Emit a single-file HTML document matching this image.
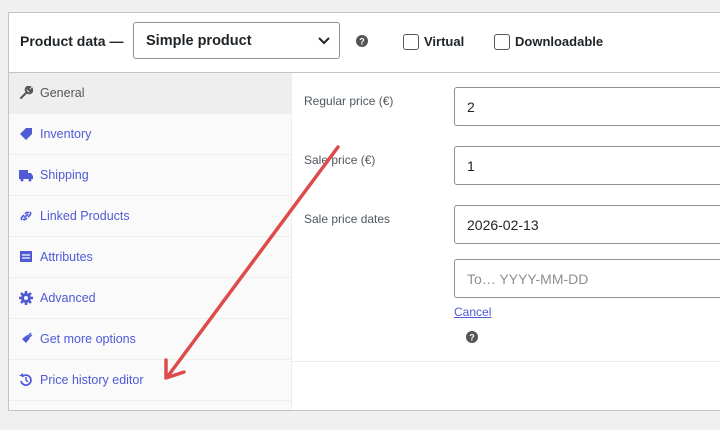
<!DOCTYPE html>
<html><head><style>
body{margin:0;width:720px;height:430px;background:#f0f0f1;font-family:"Liberation Sans",sans-serif;position:relative;overflow:hidden;font-size:13px}
.panel{position:absolute;left:8px;top:12px;width:720px;height:397px;background:#fff;border:1px solid #c3c4c7}
.hdr{position:absolute;left:0;top:0;right:0;height:59px;border-bottom:1px solid #c3c4c7}
.pd{position:absolute;left:11px;top:20px;font-weight:bold;font-size:14px;color:#1d2327}
.sel{position:absolute;left:124px;top:9px;width:207px;height:37px;border:1px solid #8c8f94;border-radius:3px;box-sizing:border-box}
.sel span{position:absolute;left:12px;top:10px;font-weight:bold;font-size:14.5px;color:#1d2327}
.cb{position:absolute;top:21px;width:14px;height:14px;border:1px solid #50575e;border-radius:3px}
.lbl{position:absolute;top:21px;font-weight:bold;font-size:13px;color:#1d2327}
.side{position:absolute;left:0;top:60px;width:282px;height:337px;background:#fafafa;border-right:1px solid #eee}
.tab{height:40px;border-bottom:1px solid #eee;position:relative;color:#4f5bd5;font-size:12.5px}
.tab span{position:absolute;left:31px;top:13px}
.tab svg{position:absolute;left:10px;top:13px}
.tab.act{background:#eee;color:#555}
.content{position:absolute;left:283px;top:60px;width:440px;height:288px;border-bottom:1px solid #eee}
.fl{position:absolute;left:12px;font-size:12px;color:#50575e}
.inp{position:absolute;left:162px;width:300px;height:39px;border:1px solid #8c8f94;border-radius:3px;box-sizing:border-box;font-size:14px;color:#1d2327;padding:11px 12px}
</style></head><body>
<div class="panel">
 <div class="hdr">
  <div class="pd">Product data —</div>
  <div class="sel"><span>Simple product</span>
   <svg style="position:absolute;right:9px;top:14px" width="12" height="8"><path d="M1 1l5 5 5-5" stroke="#1d2327" stroke-width="2" fill="none"/></svg></div>
  <svg style="position:absolute;left:347px;top:22px" width="12" height="12"><circle cx="6" cy="6" r="6" fill="#555"/><text x="6" y="9.5" font-size="9" font-weight="bold" fill="#fff" text-anchor="middle" font-family="Liberation Sans">?</text></svg>
  <div class="cb" style="left:394px"></div><div class="lbl" style="left:415px">Virtual</div>
  <div class="cb" style="left:485px"></div><div class="lbl" style="left:506px">Downloadable</div>
 </div>
 <div class="side">
  <div class="tab act"><svg width="14" height="14"><path d="M2 12L8 6M7 5a3 3 0 0 1 4-4l-2 2 2 2 2-2a3 3 0 0 1-4 4" stroke="#555" stroke-width="2" fill="none" stroke-linecap="round"/></svg><span>General</span></div>
  <div class="tab"><svg width="14" height="14"><path d="M1 7L7 1H13V7L7 13Z" fill="#4f5bd5"/></svg><span>Inventory</span></div>
  <div class="tab"><svg width="14" height="14"><path d="M0 2H9V11H0ZM9 5H12L14 8V11H9Z" fill="#4f5bd5"/><circle cx="3" cy="12" r="1.5" fill="#4f5bd5"/><circle cx="11" cy="12" r="1.5" fill="#4f5bd5"/></svg><span>Shipping</span></div>
  <div class="tab"><svg width="14" height="14"><path d="M3 11a2 2 0 0 1 0-3l2-2M11 3a2 2 0 0 1 0 3l-2 2M5 9L9 5M6 5l1-1a2 2 0 0 1 3 0M8 9l-1 1a2 2 0 0 1-3 0" stroke="#4f5bd5" stroke-width="1.6" fill="none"/></svg><span>Linked Products</span></div>
  <div class="tab"><svg width="14" height="14"><rect x="1" y="1" width="12" height="11" fill="#4f5bd5"/><path d="M3 5H11M3 8H11" stroke="#fff" stroke-width="1.3"/></svg><span>Attributes</span></div>
  <div class="tab"><svg width="14" height="14"><circle cx="7" cy="7" r="5" fill="#4f5bd5"/><path d="M7 0V14M0 7H14M2 2L12 12M12 2L2 12" stroke="#4f5bd5" stroke-width="2.5"/><circle cx="7" cy="7" r="2" fill="#fafafa"/></svg><span>Advanced</span></div>
  <div class="tab"><svg width="14" height="14"><path d="M2 12L5 9L3 7L8 3L11 6L7 11L5 9" fill="#4f5bd5"/><path d="M9 4L12 1M10 5L13 3" stroke="#4f5bd5" stroke-width="1.5"/></svg><span>Get more options</span></div>
  <div class="tab"><svg width="14" height="14"><path d="M3 4A5 5 0 1 1 2 8" stroke="#4f5bd5" stroke-width="1.8" fill="none"/><path d="M0 3H4V0" fill="#4f5bd5"/><path d="M7 4V7L9 9" stroke="#4f5bd5" stroke-width="1.5" fill="none"/></svg><span>Price history editor</span></div>
 </div>
 <div class="content">
  <div class="fl" style="top:21px">Regular price (€)</div>
  <div class="inp" style="top:14px">2</div>
  <div class="fl" style="top:80px">Sale price (€)</div>
  <div class="inp" style="top:73px">1</div>
  <div class="fl" style="top:139px">Sale price dates</div>
  <div class="inp" style="top:132px">2026-02-13</div>
  <div class="inp" style="top:186px;color:#8c8f94">To… YYYY-MM-DD</div>
  <div style="position:absolute;left:162px;top:232px;font-size:12px;color:#4f5bd5;text-decoration:underline">Cancel</div>
  <svg style="position:absolute;left:174px;top:258px" width="12" height="12"><circle cx="6" cy="6" r="6" fill="#555"/><text x="6" y="9.5" font-size="9" font-weight="bold" fill="#fff" text-anchor="middle" font-family="Liberation Sans">?</text></svg>
 </div>
</div>
<svg style="position:absolute;left:0;top:0" width="720" height="430"><path d="M338 147L168 376M166 360L166 378L184 372" stroke="#dd4b4b" stroke-width="3.5" fill="none" stroke-linecap="round" stroke-linejoin="round"/></svg>
</body></html>
